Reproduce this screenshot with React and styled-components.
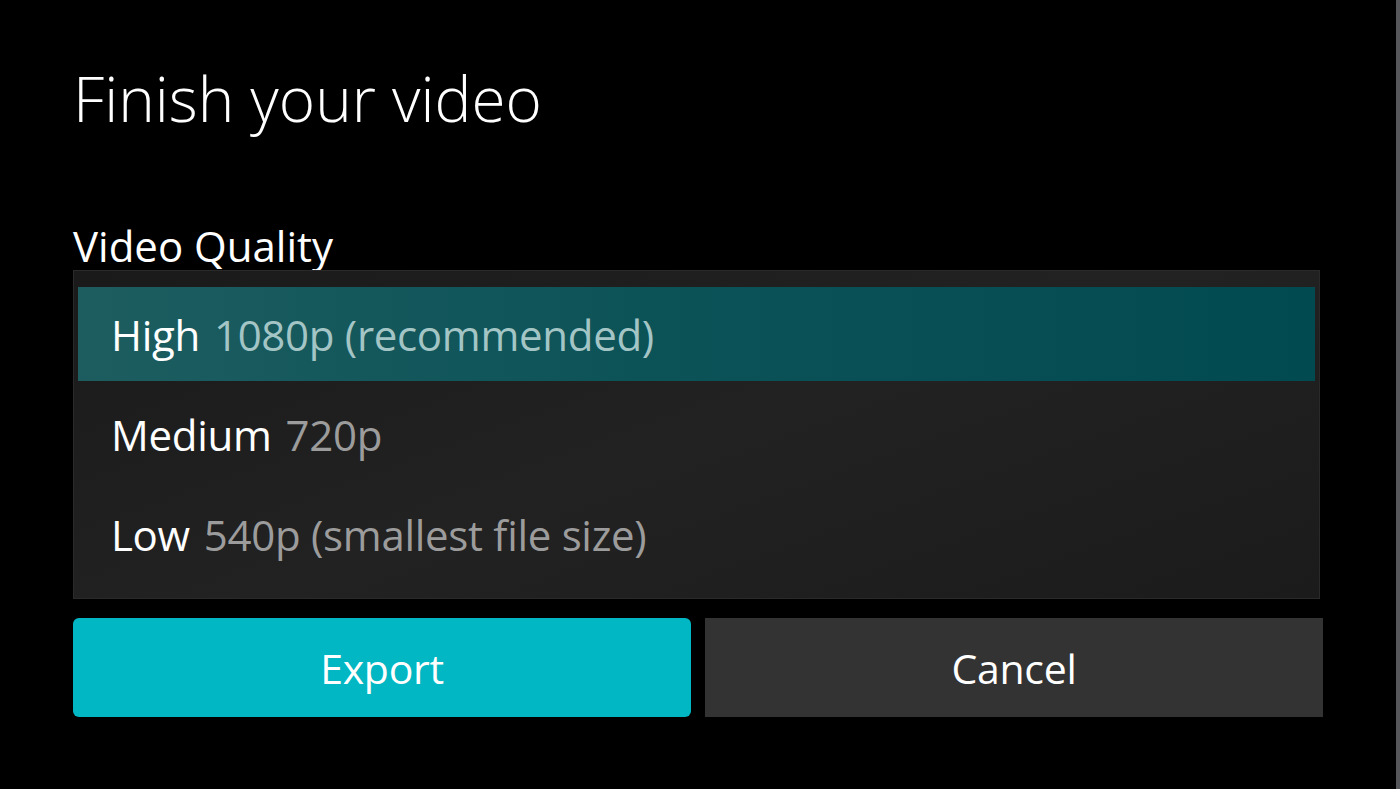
import React, { useState } from 'react'
import styled, { createGlobalStyle } from 'styled-components'

const GlobalStyle = createGlobalStyle`
  html, body {
    margin: 0;
    padding: 0;
    background: #000;
  }
  body {
    font-family: 'Open Sans', 'Noto Sans', sans-serif;
    color: #fff;
  }
`

const qualities = [
  { id: 'high', name: 'High', detail: '1080p (recommended)' },
  { id: 'medium', name: 'Medium', detail: '720p' },
  { id: 'low', name: 'Low', detail: '540p (smallest file size)' }
]

export default function App() {
  const [selected, setSelected] = useState('high')

  return (
    <Page>
      <GlobalStyle />
      <Dialog>
        <Title>Finish your video</Title>
        <Label>Video Quality</Label>
        <List>
          {qualities.map((q) => (
            <Option
              key={q.id}
              $active={selected === q.id}
              onClick={() => setSelected(q.id)}
            >
              {q.name} <Detail $active={selected === q.id}>{q.detail}</Detail>
            </Option>
          ))}
        </List>
        <Buttons>
          <Button $primary>Export</Button>
          <Button>Cancel</Button>
        </Buttons>
      </Dialog>
    </Page>
  )
}

const Page = styled.div`
  height: 100vh;
  box-sizing: border-box;
  border-right: 4px solid #56575a;
  background: #000;
`

const Dialog = styled.div`
  display: flex;
  flex-direction: column;
  padding: 62px 73px 0 73px;
`

const Title = styled.h1`
  margin: 0;
  font-size: 62px;
  line-height: 72px;
  font-weight: 300;
`

const Label = styled.div`
  margin-top: 88px;
  font-size: 42px;
  line-height: 48px;
`

const List = styled.div`
  display: flex;
  flex-direction: column;
  gap: 6px;
  margin-right: 3px;
  padding: 16px 4px 17px;
  border: 1px solid #2a2a2a;
  background: linear-gradient(160deg, #1a1a1a 0%, #222 50%, #1b1b1b 100%);
`

const Option = styled.div`
  height: 94px;
  display: flex;
  align-items: center;
  gap: 14px;
  padding-left: 33px;
  font-size: 42px;
  letter-spacing: -0.3px;
  cursor: pointer;
  background: ${(p) =>
    p.$active ? 'linear-gradient(90deg, #1d5d60 0%, #0c5358 45%, #014a50 100%)' : 'transparent'};
`

const Detail = styled.span`
  color: ${(p) => (p.$active ? '#a4c5c5' : '#9c9c9c')};
`

const Buttons = styled.div`
  display: grid;
  grid-template-columns: 1fr 1fr;
  gap: 14px;
  margin-top: 19px;
`

const Button = styled.button`
  height: 99px;
  border: none;
  border-radius: ${(p) => (p.$primary ? '6px' : '0')};
  background: ${(p) => (p.$primary ? '#00b7c3' : '#333')};
  color: #fff;
  font-family: inherit;
  font-size: 41px;
  letter-spacing: -0.3px;
  cursor: pointer;
`
